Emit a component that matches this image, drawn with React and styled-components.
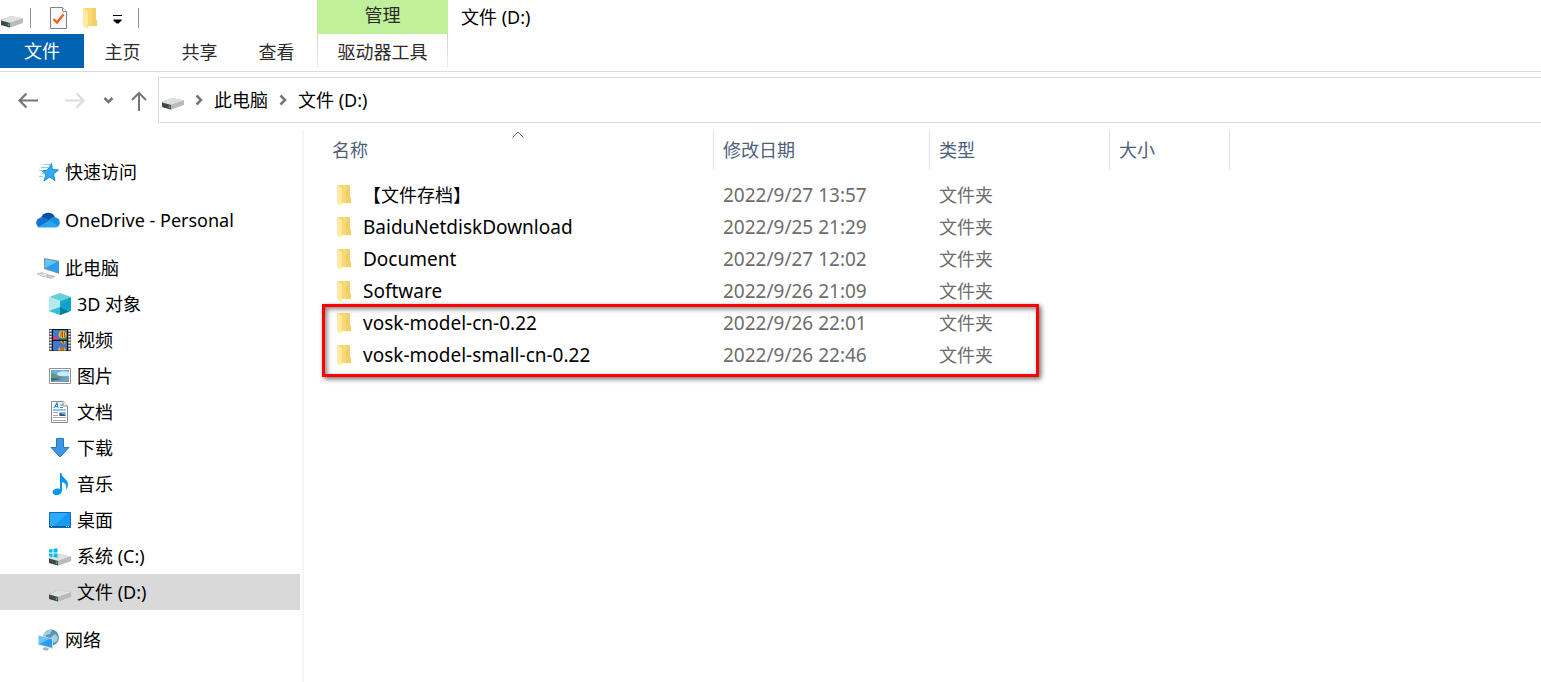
import React from 'react';
import styled, { createGlobalStyle, css } from 'styled-components'

const folders = [
  { name: '【文件存档】', date: '2022/9/27 13:57', chinese: true },
  { name: 'BaiduNetdiskDownload', date: '2022/9/25 21:29' },
  { name: 'Document', date: '2022/9/27 12:02' },
  { name: 'Software', date: '2022/9/26 21:09' },
  { name: 'vosk-model-cn-0.22', date: '2022/9/26 22:01' },
  { name: 'vosk-model-small-cn-0.22', date: '2022/9/26 22:46' },
];

const places = [
  { label: '快速访问', icon: StarIcon },
  { label: 'OneDrive - Personal', icon: CloudIcon },
  {
    label: '此电脑',
    icon: ComputerIcon,
    children: [
      { label: '3D 对象', icon: CubeIcon },
      { label: '视频', icon: VideoIcon },
      { label: '图片', icon: PictureIcon },
      { label: '文档', icon: DocumentIcon },
      { label: '下载', icon: DownloadIcon },
      { label: '音乐', icon: MusicIcon },
      { label: '桌面', icon: DesktopIcon },
      { label: '系统 (C:)', icon: SystemDriveIcon },
      { label: '文件 (D:)', icon: DriveIcon, active: true },
    ],
  },
  { label: '网络', icon: NetworkIcon },
];

export default function App() {
  return (
    <Window>
      <GlobalStyle />
      <Ribbon>
        <QuickAccess>
          <DriveIcon />
          <Separator />
          <ToolButton aria-label="属性" $width={54}><CheckPageIcon /></ToolButton>
          <ToolButton aria-label="新建文件夹" $width={10}><FolderIcon /></ToolButton>
          <ToolButton aria-label="自定义快速访问工具栏" $width={43}><MenuArrow /></ToolButton>
          <Separator />
        </QuickAccess>
        <ContextTitle>管理</ContextTitle>
        <WindowTitle>文件 (D:)</WindowTitle>
        <Tabs>
          <FileTab>文件</FileTab>
          <Tab>主页</Tab>
          <Tab>共享</Tab>
          <Tab>查看</Tab>
        </Tabs>
        <ContextTab>驱动器工具</ContextTab>
      </Ribbon>

      <NavBar>
        <ToolButton aria-label="后退" $width={46}><ArrowIcon color="#757575" /></ToolButton>
        <ToolButton aria-label="前进" $width={46}><ArrowIcon color="#dcdcdc" flip /></ToolButton>
        <ToolButton aria-label="最近浏览的位置" $width={23}><ChevronDown /></ToolButton>
        <ToolButton aria-label="上移" $width={38}><UpIcon /></ToolButton>
        <AddressBar>
          <DriveIcon />
          <ChevronRight />
          <Crumb>此电脑</Crumb>
          <ChevronRight />
          <Crumb>文件 (D:)</Crumb>
        </AddressBar>
      </NavBar>

      <Body>
        <Sidebar>
          {places.map((place) => (
            <PlaceGroup key={place.label}>
              <PlaceLink href="#">
                <place.icon />
                {place.label}
              </PlaceLink>
              {place.children && place.children.map((child) => (
                <PlaceLink href="#" key={child.label} $nested $active={child.active}>
                  <child.icon />
                  {child.label}
                </PlaceLink>
              ))}
            </PlaceGroup>
          ))}
        </Sidebar>

        <Files>
          <FileTable>
            <colgroup>
              <Col $width={391} />
              <Col $width={216} />
              <Col $width={180} />
              <Col $width={120} />
              <col />
            </colgroup>
            <thead>
              <tr>
                <HeadCell>名称<SortMark><SortIcon /></SortMark></HeadCell>
                <HeadCell>修改日期</HeadCell>
                <HeadCell>类型</HeadCell>
                <HeadCell>大小</HeadCell>
                <td />
              </tr>
            </thead>
            <FileRows>
              {folders.map((folder) => (
                <tr key={folder.name}>
                  <Cell $large={!folder.chinese}>
                    <FileName>
                      <FolderIcon />
                      {folder.name}
                    </FileName>
                  </Cell>
                  <Cell $muted $large>{folder.date}</Cell>
                  <Cell $muted>文件夹</Cell>
                  <Cell />
                  <td />
                </tr>
              ))}
            </FileRows>
          </FileTable>
          <Highlight />
        </Files>
      </Body>
    </Window>
  );
}

function DriveShape() {
  return (
    <>
      <path d="M0 13 10 9l12 2.500v4L9 20.500 0 18Z" fill="#a9aaab" />
      <path d="M0 13.500 10 9l12 2.500L9 16Z" fill="#dfe0e1" />
      <path d="M9 16 22 11.500V16L9 20.500Z" fill="#b9babb" />
      <path d="M0 13.500 9 16v4.500L0 18Z" fill="#454745" />
      <path d="M7.500 16.500V19" stroke="#35c04a" strokeWidth="1.500" />
    </>
  );
}

function DriveIcon() {
  return (
    <Icon viewBox="0 0 22 22"><DriveShape /></Icon>
  );
}

function SystemDriveIcon() {
  return (
    <Icon viewBox="0 0 22 22">
      <DriveShape />
      <path d="M0 4.500 3.500 4v3.500H0ZM4.500 3.800 8.500 3.200v4.300h-4ZM0 8.500h3.500V12L0 11.500ZM4.500 8.500h4v4.200l-4-.7Z" fill="#00bcf2" />
    </Icon>
  );
}

function FolderIcon() {
  return (
    <Icon viewBox="0 0 22 22">
      <path d="M4 1h13v12l1 .5V19H8Z" fill="#f8d775" />
      <path d="M13 1h4v12l1 .5V19h-5Z" fill="#f4cf68" />
      <path d="M4 1 9 4.500V22L4 19Z" fill="#ffe9a2" />
    </Icon>
  );
}

function CheckPageIcon() {
  return (
    <Icon viewBox="0 0 22 22">
      <path d="M3.500.5h12l4 4v17h-16Z" fill="#f8f8f8" stroke="#7f7f7f" />
      <path d="M15.500.5v4h4" fill="#fff" stroke="#8f8f8f" />
      <path d="m6.500 12 3.500 3.500 6.500-8" fill="none" stroke="#f05a1a" strokeWidth="2.200" />
    </Icon>
  );
}

function MenuArrow() {
  return (
    <Icon viewBox="0 0 22 22">
      <path d="M7 8.500h9" stroke="#000" />
      <path d="M7.500 12.500h8v1l-3 3h-2l-3-3Z" fill="#000" />
    </Icon>
  );
}

function ArrowIcon({ color, flip }) {
  return (
    <Icon viewBox="0 0 22 22">
      <path
        d={flip ? 'M2 11.500h18M13.500 4.500l7 7-7 7' : 'M21 11.500H3M9.500 4.500l-7 7 7 7'}
        fill="none"
        stroke={color}
        strokeWidth="2.200"
      />
    </Icon>
  );
}

function UpIcon() {
  return (
    <Icon viewBox="0 0 22 22">
      <path d="M11 22V4M4 11l7-7 7 7" fill="none" stroke="#757575" strokeWidth="2" />
    </Icon>
  );
}

function ChevronDown() {
  return (
    <Icon viewBox="0 0 22 22">
      <path d="m6.500 9 4 4 4-4" fill="none" stroke="#757575" strokeWidth="2.500" />
    </Icon>
  );
}

function ChevronRight() {
  return (
    <SmallIcon viewBox="0 0 8 12">
      <path d="m1.500 1.500 4.500 4.500-4.500 4.500" fill="none" stroke="#757575" strokeWidth="2.500" />
    </SmallIcon>
  );
}

function SortIcon() {
  return (
    <svg width="12" height="7" viewBox="0 0 12 7">
      <path d="m.5 6.500 5.500-5.500 5.500 5.500" fill="none" stroke="#6a6a6a" />
    </svg>
  );
}

function StarIcon() {
  return (
    <Icon viewBox="0 0 22 22">
      <path d="m14.500 2.500.8 6 6.200.5-5 4 1.500 6.500-5.500-3.500-5.500 4 2-6.500L5 9.800l5.500-.6Z" fill="#35a9ef" stroke="#168ad8" />
      <path d="M7 3.500h6M4 6.500h7M2 9.500h4M5 12.500h2M2 15.500h4" stroke="#8ccdf5" />
    </Icon>
  );
}

function CloudIcon() {
  return (
    <WideIcon viewBox="0 0 24 22">
      <path d="M5 9a7.500 7.500 0 0 1 14-1l-6 6Z" fill="#0a4fa6" />
      <path d="M5 8.500c3-.8 5 .5 9 3L3 18.500C-1.500 16-.5 9.500 5 8.500Z" fill="#1173d4" />
      <path d="M13 11c2-3.500 6-3.500 7-2.500 4 .8 5 6.500 2 9L11 13Z" fill="#1490df" />
      <path d="m2 18 12-6.500 8.500 5.500c-1 1.200-2 1.500-3.500 1.500H5c-1 0-2 0-3-.5Z" fill="#28a8ea" />
    </WideIcon>
  );
}

function ComputerIcon() {
  return (
    <Icon viewBox="0 0 22 22">
      <path d="M7 1v11l16 5V4Z" fill="#87949e" />
      <path d="M8 2.300v8.900l14 4.500V5Z" fill="#2a9df0" />
      <path d="M8 2.300v8.900L20 4.700Z" fill="#67c2fb" />
      <path d="m0 17 5-1.500L12 18l-5 2ZM9 20l5-2 4 1.500-4 2Z" fill="#c7cdd2" stroke="#98a2a9" strokeWidth=".5" />
      <path d="m2 17.500 7 1.500M5 16.500l5 1.500" stroke="#fff" strokeWidth=".6" />
    </Icon>
  );
}

function CubeIcon() {
  return (
    <Icon viewBox="0 0 22 22">
      <path d="M0 4 11 0l11 4-11 4Z" fill="#65cfdf" />
      <path d="M0 4 11 8v14L0 18Z" fill="#b4eaee" />
      <path d="M0 18 11 14v8Z" fill="#35bfd0" />
      <path d="m11 8 11-4v14l-11 4Z" fill="#12acd3" />
      <path d="M22 4v14l-11-4Z" fill="#0697c6" opacity=".4" />
      <path d="m11 14 9 4.700L11 22Z" fill="#087f9a" />
    </Icon>
  );
}

function VideoIcon() {
  return (
    <Icon viewBox="0 0 22 22">
      <path d="M0 0h22v22H0Z" fill="#5a5a5a" />
      <path d="M1.500 1v21M20.500 1v21" stroke="#fff" strokeWidth="2" strokeDasharray="1.500 1.500" />
      <path d="M3 0h16v22H3Z" fill="#171717" />
      <path d="M4 1h14v9.500H4ZM4 12h14v9.500H4Z" fill="#3f79d4" />
      <path d="M4 9c1-3 4-3 6 1.500H4Z" fill="#d0428a" />
      <path d="M9 10.500c2-2 5-2 9-2v2Z" fill="#238b45" />
      <circle cx="13.500" cy="5.500" r="3.800" fill="#efc51c" />
      <path d="M13.500 2v7M12 3v5M15.500 3v5" stroke="#a9301c" strokeWidth=".8" />
      <path d="M11 12h6l-2 3.500h-1Z" fill="#e3b41b" />
      <path d="M13 12h2l-.5 4Z" fill="#a9301c" />
      <path d="M9 21.500c0-5 7-5 8 0Z" fill="#f0b624" />
      <path d="M12 18v3.500M14 18v3.500" stroke="#8b2d25" />
    </Icon>
  );
}

function PictureIcon() {
  return (
    <Icon viewBox="0 0 22 22">
      <path d="M.5 3.500h21v15H.5Z" fill="#fff" stroke="#929292" />
      <path d="M2 5h18v12H2Z" fill="#69aee9" />
      <path d="M8 8c4-2 8-2 12-1v4H9Z" fill="#cde8f8" />
      <path d="M2 8c6 1 8 4 18 5v1H2Z" fill="#5f9a80" />
      <path d="M2 13h18v4H2Z" fill="#6fa0c4" />
      <path d="M2 13c7 0 9 1 12 1L2 16Z" fill="#3b6f6b" />
    </Icon>
  );
}

function DocumentIcon() {
  return (
    <Icon viewBox="0 0 22 22">
      <path d="M2.500.5H14L18.500 5v16.500h-16Z" fill="#fff" stroke="#8b8b8b" />
      <path d="M14 .5V5h4.500" fill="#f3f3f3" stroke="#8b8b8b" />
      <path d="m5 7 3-5 1 5M6 5.500h3M11 4h3M11 6.500h3M4 9h13" fill="none" stroke="#258bd3" strokeWidth="1.200" />
      <path d="M4 11.500h5M4 14.500h5M4 16.500h13M4 19.500h13" stroke="#a7a7a7" />
      <path d="M10.500 11h6v4h-6Z" fill="#7eb3dd" />
      <path d="m10.500 12 6 2v1h-6Z" fill="#30577b" />
    </Icon>
  );
}

function DownloadIcon() {
  return (
    <Icon viewBox="0 0 22 22">
      <path d="M7.500 1.500h7v9H20l-9 9.500-9-9.500h5.500Z" fill="#3b96e5" stroke="#2478c1" />
    </Icon>
  );
}

function MusicIcon() {
  return (
    <Icon viewBox="0 0 22 22">
      <path d="M11 0h1.500c0 5 6.500 6 6.500 11 0 3-1 5-2 6 1-5-.5-7-4-8v8c0 3-2 5-6 5-5 0-4.500-6 1-6.500 1.500 0 2 0 3 .5Z" fill="#0697ed" />
    </Icon>
  );
}

function DesktopIcon() {
  return (
    <Icon viewBox="0 0 22 22">
      <path d="M.5 3.500h21v15H.5Z" fill="#169af3" stroke="#086db4" />
      <path d="M1 4h18L5 17H1Z" fill="#2ea9fb" />
      <path d="M1 17.500h20" stroke="#075895" />
      <path d="M2 17.500h1M17 17.500h1M19 17.500h1" stroke="#fff" />
    </Icon>
  );
}

function NetworkIcon() {
  return (
    <Icon viewBox="0 0 22 22">
      <circle cx="14" cy="8.500" r="8" fill="#5795b5" />
      <path d="M7 4c3-4 7-3 8-3l-2 4-4 1-1 3-2-1ZM14 8l4-3 3 3-1 4-3 2Z" fill="#a3cde0" />
      <path d="M1 6v10l15 4V9.500Z" fill="#d2dae0" />
      <path d="M2 7.300v8l13 3.500v-8.500Z" fill="#249cf0" />
      <path d="M2 7.300v8L13 9.800Z" fill="#68c2fb" />
      <path d="m5 20 3-2 4 1.500-1 2H8Z" fill="#aab2b8" />
    </Icon>
  );
}

const GlobalStyle = createGlobalStyle`
  * {
    box-sizing: border-box;
  }

  body {
    margin: 0;
    background: #fff;
    color: #000;
    font-family: "Noto Sans", "Noto Sans CJK SC", sans-serif;
    font-size: 18px;
    line-height: 24px;
  }

  button {
    padding: 0;
    border: 0;
    background: none;
    color: inherit;
    font: inherit;
  }
`;

const Window = styled.div`
  display: flex;
  flex-direction: column;
  min-height: 100vh;
`;

const Icon = styled.svg`
  flex: none;
  width: 22px;
  height: 22px;
`;

const WideIcon = styled(Icon)`
  width: 24px;
  margin: 0 -1px;
`;

const SmallIcon = styled.svg`
  flex: none;
  width: 8px;
  height: 12px;
`;

const Ribbon = styled.header`
  display: grid;
  grid-template-columns: auto 131px 1fr;
  grid-template-rows: 34px 34px;
  column-gap: 2px;
  padding-bottom: 3px;
  border-bottom: 1px solid #dadada;
  color: #2b2b2b;
`;

const QuickAccess = styled.div`
  display: flex;
  align-items: center;
  padding: 2px 0 0 1px;
`;

const Separator = styled.span`
  width: 1px;
  height: 20px;
  margin-left: 7px;
  background: #8f8f8f;

  button + & {
    margin-left: 0;
  }
`;

const ToolButton = styled.button`
  display: flex;
  flex: none;
  align-items: center;
  justify-content: center;
  width: ${(props) => props.$width}px;
`;

const ContextTitle = styled.div`
  padding-top: 3px;
  background: #c1f09a;
  text-align: center;
`;

const WindowTitle = styled.div`
  padding: 5px 11px;
  color: #000;
`;

const Tabs = styled.nav`
  display: flex;
  grid-row: 2;
`;

const Tab = styled.button`
  width: 77px;
  padding-top: 2px;
`;

const FileTab = styled(Tab)`
  width: 84px;
  padding-top: 0;
  background: #0063b1;
  color: #fff;
`;

const ContextTab = styled.button`
  && {
    border: solid transparent;
    border-width: 0 1px;
    border-image: linear-gradient(#cfcfcf, #f0f0f0) 1;
    padding-top: 2px;
  }
`;

const NavBar = styled.div`
  display: flex;
  margin: 5px 0 7px;
  padding-left: 5px;
`;

const AddressBar = styled.div`
  display: flex;
  flex: 1;
  align-items: center;
  gap: 11px;
  height: 46px;
  padding-left: 3px;
  border: 1px solid #d9d9d9;
  border-right: 0;
`;

const Crumb = styled.button`
  white-space: nowrap;
`;

const Body = styled.div`
  display: flex;
  flex: 1;
`;

const Sidebar = styled.nav`
  display: flex;
  flex: none;
  flex-direction: column;
  gap: 12px;
  width: 304px;
  padding: 24px 2px 0 0;
  border-right: 2px solid #f6f6f6;
`;

const PlaceGroup = styled.div`
  display: flex;
  flex-direction: column;
`;

const PlaceLink = styled.a`
  display: flex;
  align-items: center;
  gap: 6px;
  height: 36px;
  padding-left: 37px;
  color: #000;
  text-decoration: none;

  ${(props) => props.$nested && css`
    padding-left: 49px;
  `}

  ${(props) => props.$active && css`
    background: #d9d9d9;
  `}
`;

const Files = styled.main`
  position: relative;
  flex: 1;
  padding-left: 19px;
`;

const FileTable = styled.table`
  width: 100%;
  border-collapse: separate;
  border-spacing: 0;
  table-layout: fixed;
`;

const Col = styled.col`
  width: ${(props) => props.$width}px;
`;

const HeadCell = styled.th`
  position: relative;
  height: 40px;
  padding: 0 9px;
  border-right: 1px solid #e3e3e3;
  color: #4c607a;
  font-weight: 400;
  text-align: left;
`;

const SortMark = styled.span`
  position: absolute;
  top: 1px;
  right: 0;
  left: 0;
  display: flex;
  justify-content: center;
`;

const FileRows = styled.tbody`
  &::before {
    content: "";
    display: block;
    height: 9px;
  }
`;

const Cell = styled.td`
  height: 32px;
  padding: 0 9px;
  color: ${(props) => (props.$muted ? '#6d6d6d' : '#000')};
  font-size: ${(props) => (props.$large ? 19 : 18)}px;
  white-space: nowrap;
`;

const FileName = styled.div`
  display: flex;
  align-items: center;
  gap: 8px;
  padding-left: 1px;
`;

const Highlight = styled.div`
  position: absolute;
  top: 174px;
  left: 18px;
  width: 717px;
  height: 73px;
  border: 3px solid #fe0000;
  box-shadow: 2px 2px 5px rgba(0, 0, 0, 0.6), inset 2px 2px 5px rgba(0, 0, 0, 0.5);
  pointer-events: none;
`;
